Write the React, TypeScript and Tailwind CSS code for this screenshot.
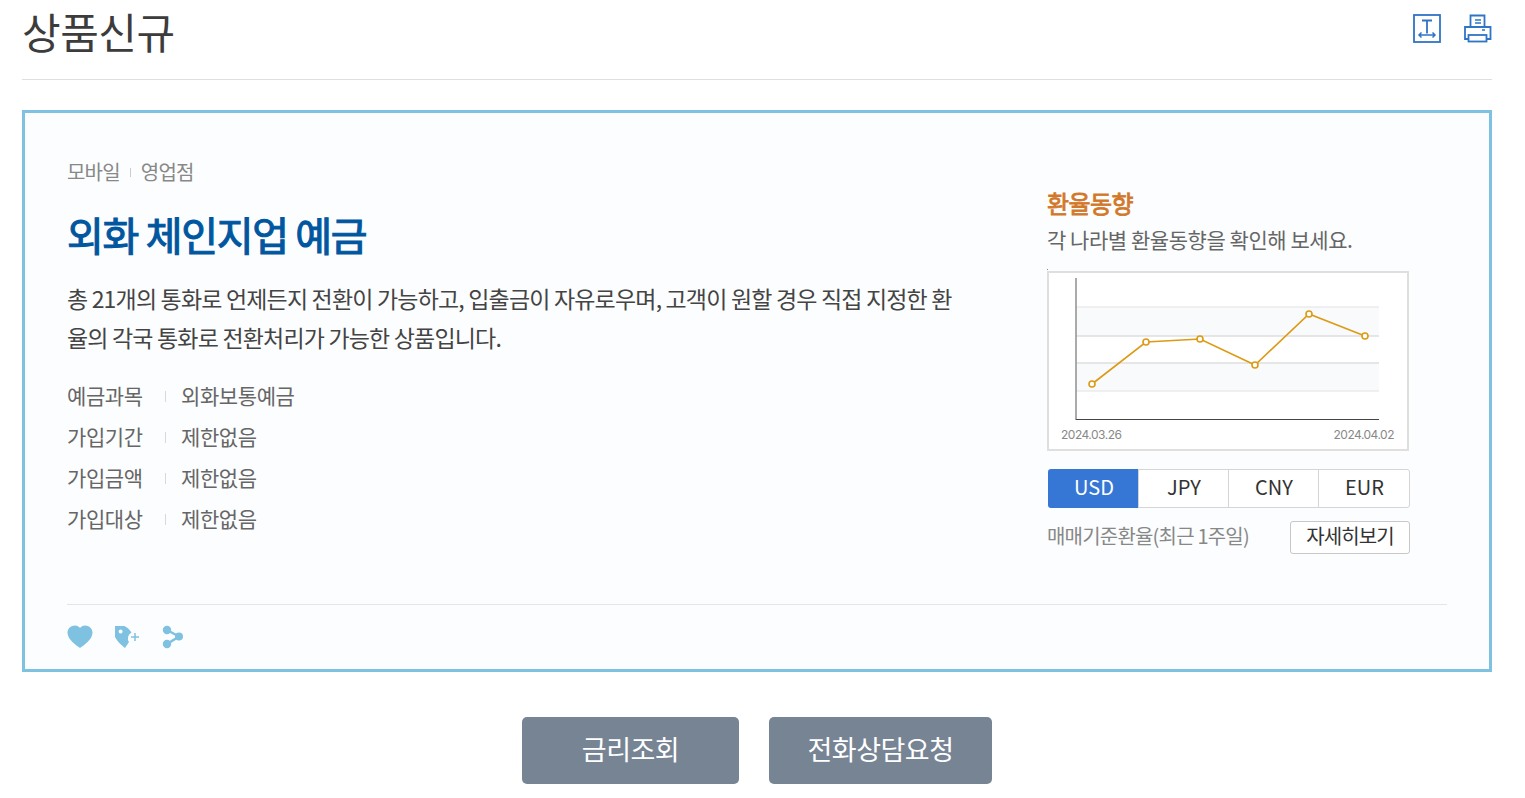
function Chart() {
  const pts: [number, number][] = [[45, 113], [99, 71], [153, 68], [208, 94], [262, 43], [318, 65]];
  return (
    <svg width="358" height="152" viewBox="2 2 358 152" className="block">
      <rect x="29" y="36" width="303" height="29" fill="#f9fafc" />
      <rect x="29" y="92" width="303" height="28" fill="#f9fafc" />
      <line x1="29" y1="36" x2="332" y2="36" stroke="#e2e2e2" />
      <line x1="29" y1="65" x2="332" y2="65" stroke="#dedede" strokeWidth="1.5" />
      <line x1="29" y1="92" x2="332" y2="92" stroke="#dedede" strokeWidth="1.5" />
      <line x1="29" y1="120" x2="332" y2="120" stroke="#e2e2e2" />
      <line x1="29" y1="7" x2="29" y2="149" stroke="#8f8f8f" strokeWidth="1.5" />
      <line x1="29" y1="148.5" x2="332" y2="148.5" stroke="#444" />
      <polyline points={pts.map((p) => p.join(",")).join(" ")} fill="none" stroke="#dd9a14" strokeWidth="1.6" />
      {pts.map((p) => (
        <circle key={p[0]} cx={p[0]} cy={p[1]} r="3" fill="#fff" stroke="#dd9a14" strokeWidth="1.6" />
      ))}
    </svg>
  );
}

function Row({ k, v }: { k: string; v: string }) {
  return (
    <div className="flex items-center h-[41px] pb-[1px] text-[21px] tracking-[-0.4px] text-[#666]">
      <span className="w-[99px] relative">
        {k}
        <i className="absolute right-0 top-[11px] h-[11px] w-px bg-[#d9d9d9]" />
      </span>
      <span className="pl-[15px]">{v}</span>
    </div>
  );
}

function Cur({ t, on, w }: { t: string; on?: boolean; w?: boolean }) {
  return (
    <div
      className={
        on
          ? "w-[91px] h-[39px] pb-[3px] pl-[1px] flex items-center justify-center bg-[#3677d6] text-white rounded-l-[3px]"
          : w
            ? "w-[92px] h-[39px] pb-[3px] pl-[1px] -ml-px flex items-center justify-center border border-[#d5d5d5] bg-white text-[#333] rounded-r-[3px]"
            : "w-[91px] h-[39px] pb-[3px] pl-[1px] -ml-px flex items-center justify-center border border-[#d5d5d5] bg-white text-[#333]"
      }
    >
      {t}
    </div>
  );
}

export default function App() {
  return (
    <div
      className="w-[1525px] h-[798px] overflow-hidden bg-white pl-[22px] pr-[33px]"
      style={{ fontFamily: '"Noto Sans CJK KR", "Noto Sans", sans-serif' }}
    >
      <header className="h-[80px] border-b border-[#dfdfdf] flex justify-between">
        <h1 className="text-[42px] leading-[62px] font-normal tracking-[-0.5px] text-[#3c3c3c]">상품신규</h1>
        <div className="flex gap-[23px] pt-[14px] pr-0">
          <svg width="28" height="29" viewBox="0 0 28 29" fill="none" stroke="#2f74c5">
            <rect x="1" y="1" width="26" height="27" strokeWidth="1.8" />
            <path d="M9 6.500h10M14 6.500v13" strokeWidth="1.800" />
            <path d="M6 21h16M8.500 18.500 6 21l2.500 2.500M19.500 18.500 22 21l-2.500 2.500" strokeWidth="1.500" />
          </svg>
          <svg width="28" height="29" viewBox="0 0 28 29" fill="none" stroke="#2f74c5" strokeWidth="1.800">
            <path d="M6.500 13V1.500h14V13" />
            <path d="M4.500 25H1V13h25.500v12h-4" />
            <rect x="4.500" y="21" width="18" height="6.500" />
            <path d="M11 6h6M11 9h6M18 16h3" strokeWidth="1.400" />
          </svg>
        </div>
      </header>

      <section className="mt-[30px] h-[562px] border-[3px] border-[#7fc1e0] bg-[#fcfdfe] px-[42px] flex flex-col">
        <div className="flex flex-1 min-h-0">
          <div className="w-[980px] pt-[44px]">
            <div className="flex items-center h-[30px] text-[20px] tracking-[-0.8px] text-[#888]">
              <span>모바일</span>
              <i className="mx-[10px] h-[9px] w-px bg-[#ccc]" />
              <span>영업점</span>
            </div>
            <h2 className="mt-[17px] h-[60px] text-[40px] leading-[60px] font-normal tracking-[-1.300px] text-[#00579f] [-webkit-text-stroke:1.1px_#00579f]">외화 체인지업 예금</h2>
            <p className="mt-[15px] w-[890px] text-[23px] leading-[39px] tracking-[-0.820px] text-[#444]">
              총 21개의 통화로 언제든지 전환이 가능하고, 입출금이 자유로우며, 고객이 원할 경우 직접 지정한 환율의 각국 통화로 전환처리가 가능한 상품입니다.
            </p>
            <div className="mt-[19px]">
              <Row k="예금과목" v="외화보통예금" />
              <Row k="가입기간" v="제한없음" />
              <Row k="가입금액" v="제한없음" />
              <Row k="가입대상" v="제한없음" />
            </div>
          </div>

          <div className="w-[363px] pt-[74px]">
            <h3 className="text-[24px] leading-[32px] font-normal tracking-[-0.6px] text-[#d2782a] [-webkit-text-stroke:0.8px_#d2782a]">환율동향</h3>
            <p className="mt-[5px] text-[21px] leading-[30px] tracking-[-0.45px] text-[#666]">각 나라별 환율동향을 확인해 보세요.</p>
            <div className="mt-[15px] h-[1px] w-[1px] bg-[#888]" />
            <div className="mt-[1px] h-[180px] w-[362px] border-2 border-[#dfdfdf] bg-white">
              <Chart />
              <div className="flex justify-between pl-[12px] pr-[13px] text-[12px] leading-[20px] tracking-[-0.5px] text-[#888]" style={{ fontFamily: '"Inter", sans-serif' }}>
                <span>2024.03.26</span>
                <span>2024.04.02</span>
              </div>
            </div>
            <div className="mt-[18px] ml-px flex text-[20px] tracking-[0.1px]">
              <Cur t="USD" on />
              <Cur t="JPY" />
              <Cur t="CNY" />
              <Cur t="EUR" w />
            </div>
            <div className="mt-[13px] flex items-center justify-between w-[363px]">
              <span className="pb-[3px] text-[20px] tracking-[-0.800px] text-[#888]">매매기준환율(최근 1주일)</span>
              <span className="h-[33px] w-[120px] pb-[3px] flex items-center justify-center border border-[#c8c8c8] rounded-[3px] bg-white text-[20px] tracking-[-0.900px] text-[#333]">자세히보기</span>
            </div>
          </div>
        </div>

        <div className="h-[65px] border-t border-[#e5e5e5] flex items-center">
          <svg width="26" height="24" viewBox="0 0 26 24" fill="#7fc1e0">
            <path d="M13 23C9 20 1 15 .5 8 .3 3.500 4 .5 8 .5c2 0 4 1 5 2.500C14 1.500 16 .5 18 .5c4 0 7.700 3 7.500 7.500C25 15 17 20 13 23Z" />
          </svg>
          <svg className="ml-[22px]" width="25" height="24" viewBox="0 0 25 24" fill="#7fc1e0">
            <path fillRule="evenodd" d="M0 1h9c2 0 6 4 7.500 6.500a6.500 6.500 0 0 0-2.500 9.500L10 23C6 20 2 16 0 12V1Zm5.600 3.600a2 2 0 1 0 0 4 2 2 0 0 0 0-4Z" />
            <path d="M16 11.250h8v1.500h-8zM19.250 8h1.500v8h-1.500z" />
          </svg>
          <svg className="ml-[22px]" width="24" height="24" viewBox="0 0 24 24" fill="#7fc1e0" stroke="#7fc1e0" strokeWidth="2">
            <path d="M5 5 17 11.500 5 19" fill="none" strokeWidth="2.500" />
            <circle cx="5" cy="5" r="3.200" />
            <circle cx="17" cy="11.500" r="3" />
            <circle cx="5" cy="19" r="3.200" />
          </svg>
        </div>
      </section>

      <div className="mt-[45px] flex justify-center gap-[30px] pl-[17px] pr-[18px]">
        <div className="w-[217px] h-[67px] pb-[2px] pl-[1px] rounded-[5px] bg-[#778494] flex items-center justify-center text-white text-[27px] tracking-[-0.5px]">금리조회</div>
        <div className="w-[223px] h-[67px] pb-[2px] pl-[1px] rounded-[5px] bg-[#778494] flex items-center justify-center text-white text-[27px] tracking-[-0.5px]">전화상담요청</div>
      </div>
    </div>
  );
}
